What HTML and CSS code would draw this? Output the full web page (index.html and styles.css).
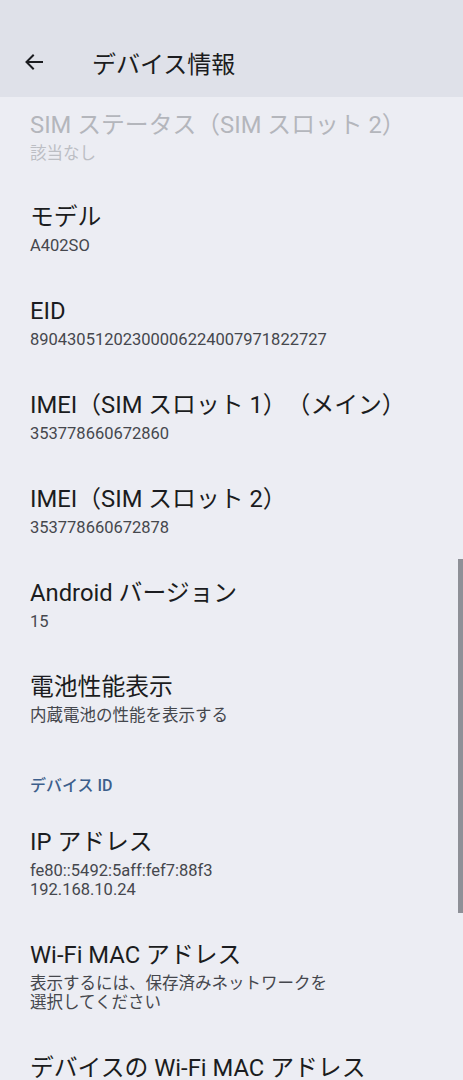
FILE: index.html
```html
<!DOCTYPE html>
<html lang="ja">
<head>
  <meta charset="UTF-8" />
  <meta name="viewport" content="width=device-width, initial-scale=1.0" />
  <title>デバイス情報</title>
  <link rel="stylesheet" href="styles.css">
</head>
<body>
  <div class="screen">
    <header class="appbar">
      <svg class="back" width="24" height="24" viewBox="0 0 24 24" fill="none" stroke="#1b1c20" stroke-width="2" stroke-linecap="square">
        <path d="M20 12H5" />
        <path d="M11 5.5L4.5 12l6.5 6.5" />
      </svg>
      <h1 class="appbar-title">デバイス情報</h1>
    </header>

    <div class="list">
      <div class="pref pref-partial pref-disabled">
        <div class="pref-title">SIM ステータス（SIM スロット 2）</div>
        <div class="pref-summary">該当なし</div>
      </div>
      <div class="pref">
        <div class="pref-title">モデル</div>
        <div class="pref-summary">A402SO</div>
      </div>
      <div class="pref">
        <div class="pref-title">EID</div>
        <div class="pref-summary">89043051202300006224007971822727</div>
      </div>
      <div class="pref">
        <div class="pref-title">IMEI（SIM スロット 1）（メイン）</div>
        <div class="pref-summary">353778660672860</div>
      </div>
      <div class="pref">
        <div class="pref-title">IMEI（SIM スロット 2）</div>
        <div class="pref-summary">353778660672878</div>
      </div>
      <div class="pref">
        <div class="pref-title">Android バージョン</div>
        <div class="pref-summary">15</div>
      </div>
      <div class="pref">
        <div class="pref-title">電池性能表示</div>
        <div class="pref-summary">内蔵電池の性能を表示する</div>
      </div>

      <div class="category">デバイス ID</div>

      <div class="pref">
        <div class="pref-title">IP アドレス</div>
        <div class="pref-summary">fe80::5492:5aff:fef7:88f3<br>192.168.10.24</div>
      </div>
      <div class="pref">
        <div class="pref-title">Wi-Fi MAC アドレス</div>
        <div class="pref-summary">表示するには、保存済みネットワークを<br>選択してください</div>
      </div>
      <div class="pref">
        <div class="pref-title">デバイスの Wi-Fi MAC アドレス</div>
        <div class="pref-summary">&nbsp;</div>
      </div>
    </div>

    <div class="scrollbar"></div>
  </div>
</body>
</html>
```

FILE: styles.css
```css
html, body {
  margin: 0;
  padding: 0;
}
body {
  font-family: Roboto, "Noto Sans CJK JP", sans-serif;
  background-color: #ecedf3;
  color: #1b1c20;
  overflow: hidden;
  text-spacing-trim: space-all;
}
.screen {
  position: relative;
  width: 463px;
  height: 1080px;
  overflow: hidden;
}
.appbar {
  display: flex;
  align-items: center;
  box-sizing: border-box;
  height: 97px;
  padding: 27px 0 0 22px;
  background-color: #dfe1e9;
}
.back {
  flex: none;
}
.appbar-title {
  margin: 0 0 0 46px;
  font-size: 24px;
  font-weight: 400;
  color: #1b1c20;
}
.pref {
  padding: 21px 30px 20px;
}
.pref-partial {
  padding-top: 13px;
  padding-bottom: 18px;
}
.pref-title {
  font-size: 23.8px;
  line-height: 30px;
  color: #1b1c20;
  white-space: nowrap;
}
.pref-summary {
  margin-top: 4px;
  font-size: 16.5px;
  line-height: 19px;
  color: #45474d;
}
.pref-disabled .pref-title {
  color: #b4b6bc;
}
.pref-disabled .pref-summary {
  color: #bcbec4;
}
.category {
  padding: 31px 30px 10px;
  font-size: 16px;
  line-height: 20px;
  font-weight: 500;
  color: #3d5f8c;
}
.scrollbar {
  position: absolute;
  right: 0;
  top: 559px;
  width: 5px;
  height: 354px;
  background-color: #8e9097;
}
```
